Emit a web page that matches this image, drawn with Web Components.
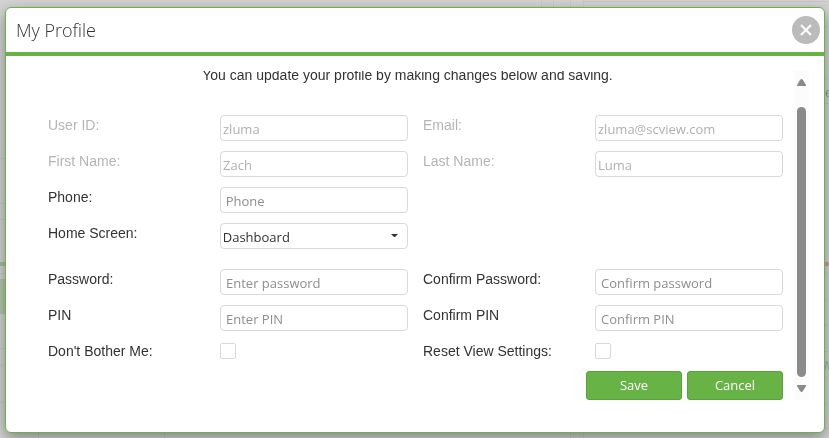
<!DOCTYPE html>
<html lang="en">
<head>
<meta charset="utf-8">
<title>My Profile</title>
<style>
  body{
    margin: 0;
    background: #d4d4d4;
    font-family: "Liberation Sans", Arial, sans-serif;
    font-size: 14px;
    line-height: 16px;
    color: #333;
    --green: #67b346;
    --ui-font: "Open Sans", "Noto Sans", sans-serif;
  }
</style>
</head>
<body>

<page-backdrop></page-backdrop>

<profile-dialog heading="My Profile">
  <span slot="intro">You can update your profile by making changes below and saving.</span>

  <field-group>
    <profile-field label="User ID:" value="zluma" disabled></profile-field>
    <profile-field label="Email:" value="zluma@scview.com" disabled></profile-field>
    <profile-field label="First Name:" value="Zach" disabled></profile-field>
    <profile-field label="Last Name:" value="Luma" disabled></profile-field>
    <profile-field label="Phone:" placeholder="Phone" type="tel" class="full"></profile-field>
    <profile-field label="Home Screen:" value="Dashboard" type="select" class="full"></profile-field>
  </field-group>

  <field-group>
    <profile-field label="Password:" placeholder="Enter password" type="password"></profile-field>
    <profile-field label="Confirm Password:" placeholder="Confirm password" type="password"></profile-field>
    <profile-field label="PIN" placeholder="Enter PIN" type="password"></profile-field>
    <profile-field label="Confirm PIN" placeholder="Confirm PIN" type="password"></profile-field>
    <profile-field label="Don't Bother Me:" type="checkbox"></profile-field>
    <profile-field label="Reset View Settings:" type="checkbox"></profile-field>
  </field-group>

  <action-button slot="actions">Save</action-button>
  <action-button slot="actions">Cancel</action-button>
</profile-dialog>

<template id="page-backdrop">
  <svg viewBox="0 0 829 438" preserveAspectRatio="xMidYMid slice" aria-hidden="true">
    <path d="M0 158.5H6M0 203.5H6M0 219.5H6M0 273.5H6M0 348.5H6M0 365.5H6M0 402.5H6
      M583 1.5H829M541.5 0V7M553.5 0V7M570.5 0V7M583.5 0V7
      M824 26.5H829M824 52.5H829M824 78.5H829M824 103.5H829M824 273.5H829M824 300.5H829M824 325.5H829M824 351.5H829M824 377.5H829M824 403.5H829
      M583 428.5H829M38.5 432V438M164.5 432V438M570.5 432V438M583.5 432V438"
      fill="none" stroke="#c9c9c9"/>
    <path d="M0 262h6v4H0z" fill="#a6c39c"/>
    <path d="M0 279h6v35H0z" fill="#b5c9af"/>
    <path d="M824 262h5v4h-5z" fill="#cf9fa6"/>
    <text x="825" y="97" fill="#999" font-size="13">e</text>
    <text x="824" y="370" fill="#9fb4c0" font-size="13" font-style="italic">M</text>
  </svg>
  <style>
    :host{
      display: block;
      position: fixed;
      inset: 0;
      z-index: -1;
    }
    svg{
      display: block;
      width: 100%;
      height: 100%;
    }
  </style>
</template>

<template id="profile-dialog">
  <section role="dialog" aria-labelledby="heading">
    <header>
      <h1 id="heading"></h1>
      <button type="button" aria-label="Close">
        <svg viewBox="0 0 28 28" width="28" height="28">
          <circle cx="14" cy="14" r="14" fill="#bbb"/>
          <path d="M9 9l10 10M19 9L9 19" stroke="#fff" stroke-width="2"/>
        </svg>
      </button>
    </header>
    <div class="body">
      <form>
        <p><slot name="intro"></slot></p>
        <slot></slot>
        <footer><slot name="actions"></slot></footer>
      </form>
      <scroll-rail></scroll-rail>
    </div>
  </section>

  <style>
    :host{
      display: block;
      padding: 7px 4px 5px 5px;
    }
    section{
      background: white;
      border: 1px solid var(--green);
      border-radius: 6px;
      box-shadow: 0 5px 15px rgba(0, 0, 0, 0.4);
    }
    header{
      display: flex;
      align-items: center;
      justify-content: space-between;
      height: 44px;
      padding: 0 4px 0 10px;
      border-bottom: 4px solid var(--green);
    }
    h1{
      margin: 0;
      font: 300 18px/24px var(--ui-font);
    }
    button{
      padding: 0;
      border: 0;
      background: none;
      border-radius: 50%;
      cursor: pointer;
    }
    svg{
      display: block;
    }
    .body{
      display: flex;
      padding: 15px 15px 32px;
    }
    form{
      flex: 1;
      display: flex;
      flex-direction: column;
      gap: 20px;
      padding: 0 11px 0 27px;
    }
    /* first line is partly scrolled out of view */
    p{
      display: flex;
      align-items: flex-end;
      justify-content: center;
      height: 12px;
      margin: 0 -11px 12px -27px;
      overflow: hidden;
      white-space: nowrap;
    }
    footer{
      display: flex;
      justify-content: flex-end;
      gap: 5px;
      margin-top: -16px;
    }
  </style>
</template>

<template id="field-group">
  <slot></slot>
  <style>
    :host{
      display: grid;
      grid-template-columns: 1fr 1fr;
      gap: 10px 15px;
    }
    ::slotted(.full){
      grid-column: 1 / -1;
      width: calc(50% - 8px);
    }
  </style>
</template>

<template id="profile-field">
  <label for="control"></label>
  <div class="control"></div>
  <style>
    :host{
      display: grid;
      grid-template-columns: 172fr 188fr;
      height: 26px;
    }
    label{
      padding-top: 2px;
    }
    :host([disabled]) label{
      color: #b5b5b5;
    }
    .control{
      position: relative;
    }
    input, select{
      box-sizing: border-box;
      display: block;
      width: 100%;
      height: 26px;
      margin: 0;
      padding: 2px 5px 0;
      border: 1px solid #d9d9d9;
      border-radius: 4px;
      background: white;
      color: #333;
      font: 13px var(--ui-font);
      outline: none;
    }
    input::placeholder{
      color: #8e8e8e;
    }
    input:disabled{
      padding-left: 2px;
      color: #b0b0b0;
    }
    select{
      appearance: none;
      padding-left: 2px;
    }
    svg{
      position: absolute;
      right: 10px;
      top: 11px;
      pointer-events: none;
    }
    input[type=checkbox]{
      appearance: none;
      width: 16px;
      height: 16px;
      margin-top: 2px;
      padding: 0;
      border-radius: 2px;
    }
    input[type=checkbox]:checked{
      background: var(--green);
    }
  </style>
</template>

<template id="action-button">
  <button type="button"><slot></slot></button>
  <style>
    :host{
      display: block;
    }
    button{
      display: block;
      width: 96px;
      height: 29px;
      padding: 0 0 2px;
      border: 1px solid #5aa03c;
      border-radius: 3px;
      background: var(--green);
      color: white;
      font: 13px var(--ui-font);
      cursor: pointer;
    }
  </style>
</template>

<template id="scroll-rail">
  <svg width="15" height="16"><path d="M3 14l3-5q1.500-2 3 0l3 5q.5 1-.7 1H3.700q-1.200 0-.7-1z"/></svg>
  <div class="thumb"></div>
  <svg width="15" height="16"><path d="M3 2l3 5q1.500 2 3 0l3-5q.5-1-.7-1H3.700q-1.200 0-.7 1z"/></svg>
  <style>
    :host{
      display: flex;
      flex-direction: column;
      align-items: center;
      width: 15px;
      background: #fcfcfc;
    }
    svg{
      flex: none;
      fill: #8b8b8b;
    }
    .thumb{
      flex: 1;
      width: 9px;
      margin: 20px 0 7px;
      border-radius: 5px;
      background: #8b8b8b;
    }
  </style>
</template>

<script>
  class TemplateElement extends HTMLElement{
    constructor(){
      super()
      const elNode = document.querySelector('#' + this.localName)
        .content.cloneNode(true)
      this.attachShadow({mode:'open'}).appendChild( elNode )
    }
  }

  class PageBackdrop extends TemplateElement{}
  class FieldGroup extends TemplateElement{}
  class ActionButton extends TemplateElement{}
  class ScrollRail extends TemplateElement{}

  class ProfileDialog extends TemplateElement{
    connectedCallback(){
      this.shadowRoot.querySelector('h1').textContent = this.getAttribute('heading')
      this.shadowRoot.querySelector('header button')
        .addEventListener('click', () => this.remove())
    }
  }

  class ProfileField extends TemplateElement{
    connectedCallback(){
      const type = this.getAttribute('type') || 'text'
      const value = this.getAttribute('value') || ''
      const box = this.shadowRoot.querySelector('.control')
      this.shadowRoot.querySelector('label').textContent = this.getAttribute('label')

      if(type === 'select'){
        box.innerHTML = `
          <select id="control"></select>
          <svg width="7" height="4"><path d="M0 0h7L4 3H3z" fill="#333"/></svg>`
        box.querySelector('select').add(new Option(value))
        return
      }
      const input = document.createElement('input')
      input.id = 'control'
      input.type = type
      if(type !== 'checkbox'){
        input.value = value
        input.placeholder = this.getAttribute('placeholder') || ''
      }
      input.disabled = this.hasAttribute('disabled')
      box.replaceChildren(input)
    }
  }

  customElements.define('page-backdrop', PageBackdrop)
  customElements.define('field-group', FieldGroup)
  customElements.define('action-button', ActionButton)
  customElements.define('scroll-rail', ScrollRail)
  customElements.define('profile-field', ProfileField)
  customElements.define('profile-dialog', ProfileDialog)
</script>
</body>
</html>
